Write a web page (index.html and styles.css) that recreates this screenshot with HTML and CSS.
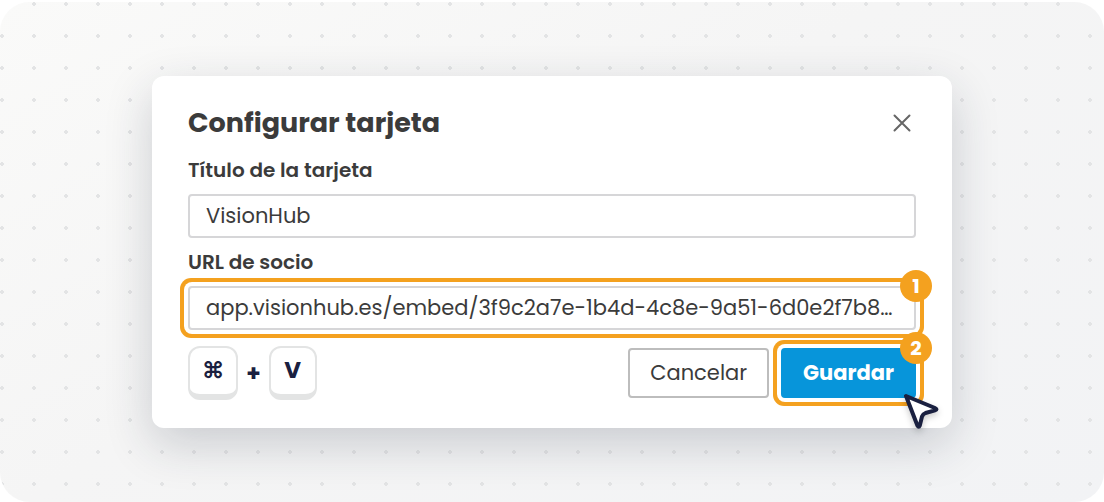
FILE: index.html
```html
<!DOCTYPE html>
<html lang="es">
<head>
<meta charset="UTF-8">
<meta name="viewport" content="width=device-width, initial-scale=1.0">
<title>Configurar tarjeta</title>
<link rel="stylesheet" href="styles.css">
</head>
<body>
<main class="canvas">
    <form class="card">
        <div class="card-header">
            <h1>Configurar tarjeta</h1>
            <button type="button" class="btn-close" aria-label="Cerrar">
                <svg viewBox="0 0 18 18" width="18" height="18"><path d="M1.5 1.5L16.5 16.5M16.5 1.5L1.5 16.5"/></svg>
            </button>
        </div>

        <label for="cardTitle">Título de la tarjeta</label>
        <input id="cardTitle" type="text" value="VisionHub">

        <label for="partnerUrl">URL de socio</label>
        <div class="step">
            <input id="partnerUrl" class="highlight" type="text" value="app.visionhub.es/embed/3f9c2a7e-1b4d-4c8e-9a51-6d0e2f7b8…">
            <span class="badge">1</span>
        </div>

        <div class="card-footer">
            <div class="keys">
                <kbd>⌘</kbd>
                <span class="plus">+</span>
                <kbd>V</kbd>
            </div>
            <div class="buttons">
                <button type="button" class="btn-cancel">Cancelar</button>
                <div class="step">
                    <button type="button" class="btn-save highlight">Guardar</button>
                    <span class="badge">2</span>
                    <svg class="cursor" viewBox="0 0 40 40" width="40" height="40"><path d="M6 6L35 18Q38 19.4 35 20.4L25.5 23Q23 24 22 26.5L19.8 35.5Q18.8 38 17.4 35.5Z"/></svg>
                </div>
            </div>
        </div>
    </form>
</main>
</body>
</html>
```
FILE: styles.css
```css
* {
    box-sizing: border-box;
}
body {
    margin: 0;
    padding-top: 2px;
    background-color: #fff;
    color: #3b3b3b;
    font-family: Poppins, Inter, sans-serif;
    font-size: 20px;
}
.canvas {
    min-height: calc(100vh - 2px);
    padding: 74px 24px;
    border-radius: 30px;
    background-color: #f5f5f5;
    background-image:
        radial-gradient(circle, #e3e4e5 2px, transparent 2px),
        linear-gradient(150deg, #fafaf9, #f5f5f5 45%, #f2f3f5);
    background-size: 32px 32px, auto;
    background-position: -14px -14px, 0 0;
}
.card {
    max-width: 800px;
    margin: 0 auto;
    padding: 27px 36px 28px;
    background-color: #fff;
    border-radius: 12px;
    box-shadow: 0 16px 48px rgba(30, 40, 60, 0.2);
}
.card-header {
    display: flex;
    justify-content: space-between;
    align-items: center;
    height: 40px;
    margin-bottom: 12px;
}
h1 {
    margin: 0;
    font-size: 27px;
    font-weight: 700;
}
button {
    font-family: inherit;
    font-size: 21px;
    cursor: pointer;
}
.btn-close {
    display: flex;
    padding: 5px;
    border: none;
    background: none;
}
.btn-close path {
    stroke: #666;
    stroke-width: 2;
    stroke-linecap: round;
}
label {
    display: block;
    line-height: 30px;
    margin-bottom: 9px;
    font-weight: 600;
}
input {
    display: block;
    width: 100%;
    height: 44px;
    margin-bottom: 9px;
    padding: 0 16px 2px;
    border: 2px solid #d6d6d8;
    border-radius: 4px;
    background-color: #fff;
    color: #3b3b3b;
    font-family: inherit;
    font-size: 21px;
    text-overflow: ellipsis;
}
.step {
    position: relative;
}
.step input {
    margin-bottom: 0;
}
.highlight {
    box-shadow: 0 0 0 4px #fff, 0 0 0 8px #f4a11f;
}
.badge {
    position: absolute;
    top: -16px;
    right: -16px;
    width: 32px;
    height: 32px;
    border-radius: 50%;
    background-color: #f4a11f;
    color: #fff;
    font-weight: 700;
    line-height: 32px;
    text-align: center;
}
.card-footer {
    display: flex;
    justify-content: space-between;
    align-items: center;
    margin-top: 16px;
}
.keys {
    display: flex;
    align-items: center;
    gap: 8px;
    color: #1a2040;
}
kbd {
    min-width: 48px;
    height: 54px;
    padding: 0 12px;
    border: 2px solid #e3e4e4;
    border-bottom-width: 6px;
    border-radius: 12px;
    font-family: Poppins, Inter, "DejaVu Sans", sans-serif;
    font-size: 23px;
    font-weight: 700;
    line-height: 44px;
    text-align: center;
}
.plus {
    font-size: 23px;
    font-weight: 700;
}
.buttons {
    display: flex;
    gap: 12px;
}
.btn-cancel,
.btn-save {
    display: block;
    height: 50px;
    padding: 0 20px 2px;
    border: 2px solid #bdbdbd;
    border-radius: 4px;
    background-color: #fff;
    color: #3b3b3b;
}
.btn-save {
    border-color: #0795da;
    background-color: #0795da;
    color: #fff;
    font-weight: 700;
}
.cursor {
    position: absolute;
    right: -24px;
    bottom: -32px;
    filter: drop-shadow(0 3px 3px rgba(0, 0, 0, 0.2));
}
.cursor path {
    fill: #fff;
    stroke: #1a2040;
    stroke-width: 4;
    stroke-linejoin: round;
}
```
